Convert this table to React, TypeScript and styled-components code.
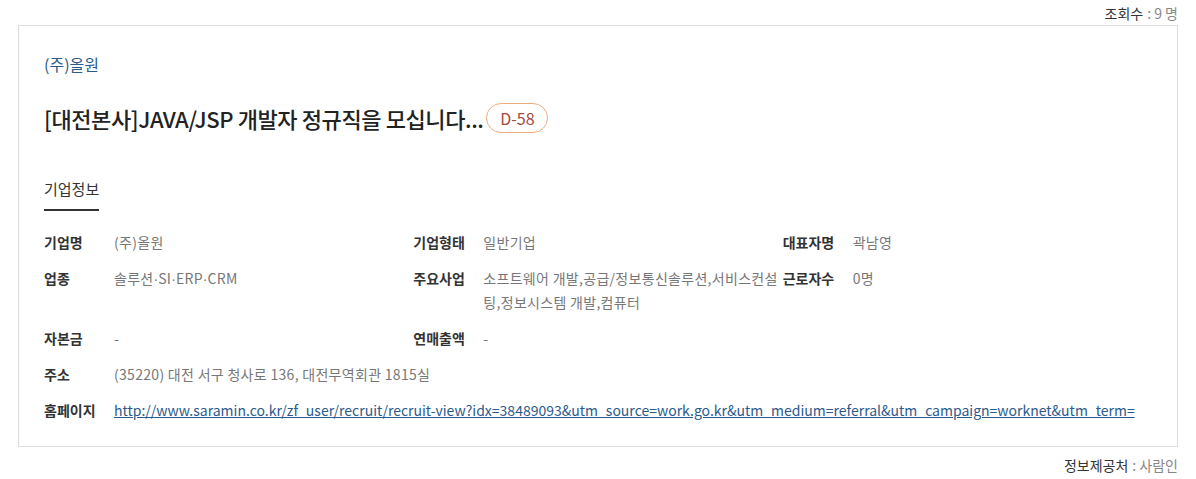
import React from 'react'
import styled, { createGlobalStyle } from 'styled-components'

const GlobalStyle = createGlobalStyle`
  body {
    margin: 0;
    background: #fff;
    font-family: 'Noto Sans CJK KR', 'Noto Sans', sans-serif;
    color: #333;
  }
`

const $Page = styled.div`
  width: 1196px;
  padding: 0 18px;
  box-sizing: border-box;
`

const $Meta = styled.div<{ $height: number }>`
  display: flex;
  justify-content: flex-end;
  align-items: center;
  height: ${(p) => p.$height}px;
  font-size: 14px;
  color: #333;
`

const $MetaValue = styled.span`
  color: #888;
  margin-left: 4px;
`

const $Card = styled.div`
  border: 1px solid #dcdde3;
  padding: 24px 25px 24px;
`

const $Company = styled.div`
  font-size: 16px;
  line-height: 28px;
  color: #2b5b8c;
`

const $TitleRow = styled.div`
  display: flex;
  align-items: center;
  gap: 3px;
  margin-top: 23px;
`

const $Title = styled.h2`
  margin: 0;
  font-size: 22px;
  font-weight: 500;
  line-height: 34px;
  color: #222;
  letter-spacing: -0.4px;
`

const $DDay = styled.span`
  display: inline-flex;
  align-items: center;
  justify-content: center;
  width: 62px;
  height: 30px;
  box-sizing: border-box;
  border: 1px solid #efad7f;
  border-radius: 15px;
  font-size: 16px;
  color: #a34b3f;
`

const $Tabs = styled.div`
  display: flex;
  margin-top: 42px;
`

const $Tab = styled.div<{ $active?: boolean }>`
  font-size: 15px;
  line-height: 24px;
  padding-bottom: 8px;
  color: #333;
  border-bottom: 2px solid ${(p) => (p.$active ? '#333' : 'transparent')};
`

const $Grid = styled.div`
  display: grid;
  grid-template-columns: repeat(3, 1fr);
  row-gap: 12px;
  margin-top: 19px;
  font-size: 14px;
  line-height: 24px;
  letter-spacing: 0.3px;
`

const $Item = styled.div<{ $span?: number }>`
  display: flex;
  grid-column: span ${(p) => p.$span ?? 1};
`

const $Label = styled.div`
  flex: 0 0 70px;
  font-weight: 700;
  color: #333;
  letter-spacing: 0;
`

const $Value = styled.div`
  flex: 1;
  min-width: 0;
  color: #777;
  word-break: break-all;
`

const $Dot = styled.span`
  font-family: 'Liberation Sans', sans-serif;
  letter-spacing: 0;
`

const $Link = styled.a`
  color: #2b5b8c;
  text-decoration: underline;
  white-space: nowrap;
  letter-spacing: 0;
`

const url =
  'http://www.saramin.co.kr/zf_user/recruit/recruit-view?idx=38489093&utm_source=work.go.kr&utm_medium=referral&utm_campaign=worknet&utm_term='

const App = (): React.ReactElement => {
  return (
    <$Page>
      <GlobalStyle />
      <$Meta $height={25}>
        조회수<$MetaValue>: 9 명</$MetaValue>
      </$Meta>
      <$Card>
        <$Company>(주)올원</$Company>
        <$TitleRow>
          <$Title>[대전본사]JAVA/JSP 개발자 정규직을 모십니다...</$Title>
          <$DDay>D-58</$DDay>
        </$TitleRow>
        <$Tabs>
          <$Tab $active>기업정보</$Tab>
        </$Tabs>
        <$Grid>
          <$Item>
            <$Label>기업명</$Label>
            <$Value>(주)올원</$Value>
          </$Item>
          <$Item>
            <$Label>기업형태</$Label>
            <$Value>일반기업</$Value>
          </$Item>
          <$Item>
            <$Label>대표자명</$Label>
            <$Value>곽남영</$Value>
          </$Item>
          <$Item>
            <$Label>업종</$Label>
            <$Value>
              솔루션<$Dot>·</$Dot>SI<$Dot>·</$Dot>ERP<$Dot>·</$Dot>CRM
            </$Value>
          </$Item>
          <$Item>
            <$Label>주요사업</$Label>
            <$Value>소프트웨어 개발,공급/정보통신솔루션,서비스컨설팅,정보시스템 개발,컴퓨터</$Value>
          </$Item>
          <$Item>
            <$Label>근로자수</$Label>
            <$Value>0명</$Value>
          </$Item>
          <$Item>
            <$Label>자본금</$Label>
            <$Value>-</$Value>
          </$Item>
          <$Item $span={2}>
            <$Label>연매출액</$Label>
            <$Value>-</$Value>
          </$Item>
          <$Item $span={3}>
            <$Label>주소</$Label>
            <$Value>(35220) 대전 서구 청사로 136, 대전무역회관 1815실</$Value>
          </$Item>
          <$Item $span={3}>
            <$Label>홈페이지</$Label>
            <$Value>
              <$Link href={url}>{url}</$Link>
            </$Value>
          </$Item>
        </$Grid>
      </$Card>
      <$Meta $height={36}>
        정보제공처<$MetaValue>: 사람인</$MetaValue>
      </$Meta>
    </$Page>
  )
}

export default App
